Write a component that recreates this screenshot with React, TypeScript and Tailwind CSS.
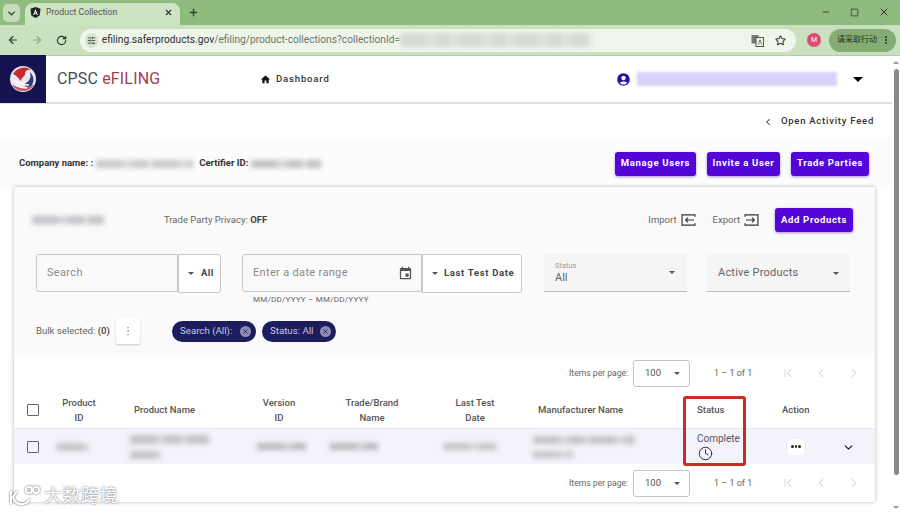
import React from "react";
import { ArrowLeft, ArrowRight, RotateCw, X, Plus, ChevronDown, Minus, Square, Star, SlidersHorizontal, EllipsisVertical, ChevronLeft, ChevronRight, ChevronFirst, Clock } from "lucide-react";

function Blur({ w, h = 8, tone = "#c4c4c8", cls = "" }: { w: number; h?: number; tone?: string; cls?: string }) {
  return <div className={"blur-[2.5px] " + cls} style={{ width: w, height: h, background: `repeating-linear-gradient(90deg, ${tone} 0 26px, ${tone}aa 26px 36px, ${tone} 36px 52px, ${tone}66 52px 56px)` }} />;
}

function Caret({ cls = "" }: { cls?: string }) {
  return <div className={"w-0 h-0 border-l-[3.5px] border-r-[3.5px] border-t-[3.5px] border-l-transparent border-r-transparent border-t-[#555] " + cls} />;
}

function Btn({ children, w }: { children: React.ReactNode; w: string }) {
  return <div className={"h-[24px] rounded-[3px] bg-[#5205d6] text-white text-[9.5px] font-bold tracking-[0.07em] flex items-center justify-center shadow-[0_1px_3px_rgba(80,0,200,0.45)] " + w}>{children}</div>;
}

function Pager({ h }: { h: string }) {
  return (
    <div className={"flex items-center text-[#666] text-[8.6px] " + h}>
      <div className="ml-[555px] w-[60px] mt-[1px] whitespace-nowrap">Items per page:</div>
      <div className="ml-[4px] w-[57px] h-[27px] border border-[#c4c4c4] rounded-[3px] bg-white flex items-center justify-between pl-[11px] pr-[9px] text-[9.5px] text-[#555]">
        <span>100</span><Caret />
      </div>
      <div className="ml-[24px] w-[67px] mt-[1px] text-[9px] text-[#666]">1 – 1 of 1</div>
      <div className="flex text-[#dcdcdc] gap-[19px]">
        <ChevronFirst size={14} /><ChevronLeft size={14} /><ChevronRight size={14} />
      </div>
    </div>
  );
}

const grid = "grid grid-cols-[38px_54px_144px_58px_128px_78px_183px_85px_48px_45px] items-center";

export default function App() {
  return (
    <div className="w-[900px] h-[512px] overflow-hidden relative bg-white font-['Roboto','Noto_Sans_CJK_SC',sans-serif]">
      {/* tab strip */}
      <div className="h-[25px] bg-[#8fbb7f] flex items-end pl-[3px] text-[#333]">
        <div className="w-[17px] h-[18px] mb-[3px] rounded-[5px] bg-[#c4ddb8] flex items-center justify-center"><ChevronDown size={11} strokeWidth={3} /></div>
        <div className="ml-[5px] w-[155px] h-[22px] pb-[3px] bg-[#cde4c3] rounded-t-[8px] flex items-center pl-[5px] pr-[7px]">
          <svg width="11" height="11" viewBox="0 0 12 12"><path d="M6 0 11.5 2 10.6 9.2 6 12 1.4 9.2 .5 2z" fill="#222" /><path d="M6 2.2 3.4 8.6h1.1l.5-1.3h2l.5 1.3h1.1zM5.4 6.4 6 4.8l.6 1.6z" fill="#fff" /></svg>
          <span className="ml-[5px] text-[8.7px] text-[#555] flex-1">Product Collection</span>
          <X size={9} strokeWidth={3} />
        </div>
        <Plus size={11} strokeWidth={3} className="ml-[8px] mb-[7px] text-[#2f4a2a]" />
        <div className="ml-auto flex items-center mb-[7px] pr-[10px] text-[#333] gap-[19px]">
          <Minus size={10} /><Square size={9} strokeWidth={2} /><X size={12} />
        </div>
      </div>
      {/* toolbar */}
      <div className="h-[31px] bg-[#c9e1be] flex items-center text-[#333] border-b border-[#b6cbab]">
        <ArrowLeft size={12} className="ml-[7px]" strokeWidth={2.2} />
        <ArrowRight size={12} className="ml-[12px] text-[#8da586]" strokeWidth={2.2} />
        <RotateCw size={11} className="ml-[13px]" strokeWidth={2.6} />
        <div className="ml-[13px] w-[320px] flex-none h-[23px] bg-[#eef6ea] rounded-l-full flex items-center pl-[5px]">
          <div className="w-[15px] h-[15px] rounded-full bg-[#d6e8cd] flex items-center justify-center"><SlidersHorizontal size={9} /></div>
          <span className="ml-[4px] text-[10.2px] whitespace-nowrap text-[#2e2e2e]">efiling.saferproducts.gov<span className="text-[#6b7568]">/efiling/product-collections?collectionId=</span></span>
        </div>
        <div className="w-[396px] flex-none h-[23px] bg-[#eef6ea] rounded-r-full flex items-center justify-end pr-[10px] gap-[11px]">
          <Blur w={190} h={14} tone="#d4dbd0" cls="mr-auto" />
          <svg width="13" height="13" viewBox="0 0 13 13"><rect x="0.5" y="1" width="7" height="8.5" fill="#777" /><rect x="5" y="3.5" width="7.5" height="9" fill="#eef6ea" stroke="#555" strokeWidth="1" /><path d="M7.5 10.5 8.7 6h.6l1.2 4.5" stroke="#555" fill="none" strokeWidth=".8" /></svg>
          <Star size={11} strokeWidth={2.2} />
        </div>
        <div className="ml-[11px] w-[14px] h-[14px] rounded-full bg-[#dc4a77] text-white text-[7px] flex items-center justify-center">M</div>
        <div className="ml-[8px] w-[67px] h-[23px] rounded-full bg-[#84ad74] flex items-center justify-between pl-[8px] pr-[5px] text-[8px] text-[#26331f]">
          <span className="whitespace-nowrap">请采取行动</span><EllipsisVertical size={10} strokeWidth={3} />
        </div>
      </div>
      {/* page */}
      <div className="flex h-[456px]">
        <div className="w-[892px]">
          {/* header */}
          <div className="h-[48px] flex items-center bg-white border-b-2 border-[#e0e0e0]">
            <div className="w-[46px] h-[48px] bg-[#14134f] flex items-center justify-center">
              <svg width="28" height="28" viewBox="0 0 28 28">
                <circle cx="14" cy="14" r="13" fill="#e8e8f0" />
                <path d="M3 20a13 13 0 0 0 22 0L12 22z" fill="#c45a66" />
                <path d="M4 9c3-6 13-9 18-4-4-1-6 1-6 4 0 3-4 3-4 7-3-3-5-6-8-7z" fill="#c92a32" />
                <path d="M21 7c4 4 5 10 1 14-3 1-6 0-7-2 4-1 8-6 6-12z" fill="#2c3a86" />
                <path d="M5 16c5 2 10 4 15 4M6 20c4 2 9 3 12 3" stroke="#fff" strokeWidth="1.6" fill="none" />
              </svg>
            </div>
            <div className="ml-[11px] w-[203px] text-[16px] text-[#4a4a55] tracking-[0.01em]">CPSC <span className="text-[#a2404f]">eFILING</span></div>
            <svg width="11" height="11" viewBox="0 0 24 24" fill="#111"><path d="M10 20v-6h4v6h5v-8h3L12 3 2 12h3v8z" /></svg>
            <span className="ml-[5px] w-[340px] text-[9.5px] font-medium tracking-[0.09em] text-[#333]">Dashboard</span>
            <svg width="15" height="15" viewBox="0 0 24 24" fill="#2b0fa8"><path d="M12 2C6.48 2 2 6.48 2 12s4.48 10 10 10 10-4.48 10-10S17.52 2 12 2zm0 4c1.93 0 3.5 1.57 3.5 3.5S13.93 13 12 13s-3.5-1.57-3.5-3.5S10.07 6 12 6zm0 14c-2.03 0-4.43-.82-6.14-2.88C7.55 15.8 9.68 15 12 15s4.45.8 6.14 2.12C16.43 19.18 14.03 20 12 20z" /></svg>
            <div className="ml-[6px] w-[200px] h-[14px] bg-[#d8d2fb] blur-[1.5px]" />
            <div className="ml-[16px] w-0 h-0 border-l-[5px] border-r-[5px] border-t-[5px] border-l-transparent border-r-transparent border-t-black" />
          </div>
          {/* activity */}
          <div className="h-[34px] flex items-center justify-end pr-[18px] text-[9.5px] font-medium tracking-[0.08em] text-[#333] gap-[6px] pt-[1px]">
            <ChevronLeft size={10} strokeWidth={2.5} /><span className="ml-[2px]">Open Activity Feed</span>
          </div>
          {/* company */}
          <div className="h-[49px] pt-[2px] flex items-center bg-[#fcfcfc] pl-[19px] pr-[23px] text-[9.5px] font-bold text-[#333]">
            <span>Company name: :</span>
            <Blur w={97} tone="#c8c8c8" cls="ml-[3px]" />
            <span className="ml-[6px]">Certifier ID:</span>
            <Blur w={70} tone="#c0c0c0" cls="ml-[3px]" />
            <div className="ml-auto flex gap-[11px]">
              <Btn w="w-[81px]">Manage Users</Btn>
              <Btn w="w-[73px]">Invite a User</Btn>
              <Btn w="w-[78px]">Trade Parties</Btn>
            </div>
          </div>
          {/* card */}
          <div className="ml-[14px] w-[861px] h-[315px] bg-white shadow-[0_0_4px_rgba(0,0,0,0.28)]">
            <div className="h-[166px] bg-[#fafafa] flex flex-col">
              <div className="h-[66px] flex items-center">
                <Blur w={72} tone="#c2c2c6" cls="ml-[18px]" />
                <span className="ml-[60px] text-[9.5px] text-[#666]">Trade Party Privacy: <b className="text-[#444]">OFF</b></span>
                <div className="ml-auto flex items-center text-[9.5px] text-[#666]">
                  <span>Import</span>
                  <svg width="15" height="12" viewBox="0 0 16 13" className="ml-[4px] text-[#333]" fill="none" stroke="currentColor" strokeWidth="1.3"><path d="M15 3V1H1v11h14v-2M14 6.5H5M7.5 4 5 6.5 7.5 9" /></svg>
                  <span className="ml-[17px]">Export</span>
                  <svg width="15" height="12" viewBox="0 0 16 13" className="ml-[4px] text-[#333]" fill="none" stroke="currentColor" strokeWidth="1.3"><path d="M1 3V1h14v11H1v-2M2 6.5h9M8.5 4 11 6.5 8.5 9" /></svg>
                  <Btn w="ml-[16px] w-[78px] mr-[22px]">Add Products</Btn>
                </div>
              </div>
              <div className="h-[38px] mt-[1px] flex items-start pl-[22px]">
                <div className="w-[142px] h-[38px] pt-[1px] border border-[#c8c8c8] rounded-l-[3px] flex items-center pl-[10px] text-[11px] text-[#8a8a8a] tracking-[0.03em]">Search</div>
                <div className="w-[43px] h-[39px] border border-[#c8c8c8] rounded-r-[3px] bg-white flex items-center pl-[9px] gap-[7px] text-[9.5px] font-bold tracking-[0.05em] text-[#444]"><Caret cls="border-t-[#333]" />All</div>
                <div className="ml-[21px] w-[180px] h-[38px] pt-[1px] border border-[#c8c8c8] rounded-l-[3px] flex items-center pl-[10px] pr-[8px] justify-between text-[11px] text-[#8a8a8a] tracking-[0.03em]">
                  Enter a date range
                  <svg width="15" height="15" viewBox="0 0 24 24" fill="#555"><path d="M17 12h-5v5h5v-5zM16 1v2H8V1H6v2H5c-1.11 0-1.99.9-1.99 2L3 19c0 1.1.89 2 2 2h14c1.1 0 2-.9 2-2V5c0-1.1-.9-2-2-2h-1V1h-2zm3 18H5V8h14v11z" /></svg>
                </div>
                <div className="w-[100px] h-[39px] border border-[#c8c8c8] rounded-r-[3px] bg-white flex items-center pl-[9px] gap-[6px] text-[9.5px] font-bold tracking-[0.07em] text-[#444] whitespace-nowrap"><Caret cls="border-t-[#333]" />Last Test Date</div>
                <div className="ml-[22px] w-[143px] h-[38px] bg-[#f5f5f5] border-b border-[#bbb] flex items-center justify-between pl-[11px] pr-[12px]">
                  <div className="flex flex-col leading-none">
                    <span className="text-[7.5px] text-[#999]">Status</span>
                    <span className="text-[11px] mt-[3px] text-[#666]">All</span>
                  </div>
                  <Caret />
                </div>
                <div className="ml-[20px] w-[143px] h-[38px] pt-[1px] bg-[#f5f5f5] border-b border-[#bbb] flex items-center justify-between pl-[11px] pr-[11px] text-[11px] tracking-[0.02em] text-[#666]">
                  Active Products<Caret />
                </div>
              </div>
              <div className="pl-[239px] mt-[2px] text-[8px] tracking-[0.03em] text-[#666] leading-[12px]">MM/DD/YYYY – MM/DD/YYYY</div>
              <div className="mt-[12px] flex items-center pl-[22px] h-[26px]">
                <span className="w-[75px] whitespace-nowrap text-[9.6px] text-[#666]">Bulk selected: <b className="font-medium text-[#444]">(0)</b></span>
                <div className="ml-[5px] w-[24px] h-[26px] bg-white rounded-[2px] shadow-[0_1px_2px_rgba(0,0,0,0.2)] flex items-center justify-center text-[#aaa]"><EllipsisVertical size={12} /></div>
                <div className="ml-[32px] w-[84px] h-[21px] rounded-full bg-[#1c1c5e] flex items-center justify-between pl-[8px] pr-[5px] text-[9.7px] text-[#c9cbe6]">
                  <span>Search (All):</span><X size={11} strokeWidth={3} className="bg-[#8b8db5] rounded-full p-[2px] text-[#1c1c5e]" />
                </div>
                <div className="ml-[6px] w-[74px] h-[21px] rounded-full bg-[#1c1c5e] flex items-center justify-between pl-[8px] pr-[5px] text-[9.7px] text-[#c9cbe6]">
                  <span>Status: All</span><X size={11} strokeWidth={3} className="bg-[#8b8db5] rounded-full p-[2px] text-[#1c1c5e]" />
                </div>
              </div>
            </div>
            <Pager h="h-[40px]" />
            {/* table */}
            <div className={grid + " h-[36px] pb-[2px] text-[9.5px] font-medium text-[#555] text-center leading-[15px] border-b border-[#e6e8f0]"}>
              <div className="w-[12px] h-[12px] border border-[#666] rounded-[1px] ml-[13px]" />
              <div>Product<br />ID</div>
              <div className="text-left pl-[28px]">Product Name</div>
              <div>Version<br />ID</div>
              <div>Trade/Brand<br />Name</div>
              <div>Last Test<br />Date</div>
              <div className="text-left pl-[24px]">Manufacturer Name</div>
              <div className="text-left">Status</div>
              <div className="text-left">Action</div>
              <div />
            </div>
            <div className={grid + " h-[35px] bg-[#f3f4fb]"}>
              <div className="w-[12px] h-[12px] border border-[#666] rounded-[1px] ml-[13px]" />
              <Blur w={32} cls="ml-[5px]" />
              <div className="flex flex-col gap-[7px] pl-[24px]">
                <Blur w={79} h={9} />
                <Blur w={31} />
              </div>
              <Blur w={49} h={7} tone="#b8b8be" cls="ml-[7px]" />
              <Blur w={48} h={7} tone="#b8b8be" cls="ml-[22px]" />
              <Blur w={56} h={7} cls="ml-[7px]" />
              <div className="flex flex-col gap-[7px] pl-[19px]">
                <Blur w={102} h={8} />
                <Blur w={40} h={7} />
              </div>
              <div className="flex flex-col items-start text-[10px] leading-[14px] text-[#555]">
                <span>Complete</span>
                <Clock size={15} strokeWidth={1.6} className="ml-[1px] text-[#333]" />
              </div>
              <div className="w-[16px] h-[16px] ml-[6px] rounded-[3px] bg-white text-[#222] flex items-center justify-center gap-[1px]">
                <span className="w-[2.5px] h-[2.5px] rounded-full bg-[#222]" /><span className="w-[2.5px] h-[2.5px] rounded-full bg-[#222]" /><span className="w-[2.5px] h-[2.5px] rounded-full bg-[#222]" />
              </div>
              <ChevronDown size={13} strokeWidth={2.4} className="ml-[12px] mt-[2px] text-[#222]" />
            </div>
            <Pager h="h-[38px]" />
          </div>
        </div>
        {/* scrollbar */}
        <div className="w-[8px] bg-white flex flex-col items-center">
          <div className="mt-[5px] w-0 h-0 border-l-[3px] border-r-[3px] border-b-[3px] border-l-transparent border-r-transparent border-b-[#999]" />
          <div className="mt-[5px] w-[5px] h-[406px] rounded-full bg-[#8a8a8a]" />
          <div className="mt-[31px] w-0 h-0 border-l-[3px] border-r-[3px] border-t-[3px] border-l-transparent border-r-transparent border-t-[#999]" />
        </div>
      </div>
      {/* red highlight */}
      <div className="absolute left-[683px] top-[396px] w-[63px] h-[70px] border-[3px] border-[#cc2a22] rounded-[3px]" />
      {/* watermark */}
      <div className="absolute left-[9px] top-[485px] flex items-center text-white">
        <svg width="33" height="22" viewBox="0 0 33 22" fill="none" stroke="#fff" strokeWidth="2" style={{ filter: "drop-shadow(0 0 1px #666)" }}>
          <path d="M2 6v13M8 6 4 12c1 6 8 9 13 6 2-1 3-3 3-4" />
          <circle cx="20" cy="5" r="3" /><circle cx="27" cy="5" r="3" />
        </svg>
        <span className="ml-[2px] text-[18px] leading-none tracking-[0.5px] [text-shadow:0_0_2px_#555]">大数跨境</span>
      </div>
    </div>
  );
}
